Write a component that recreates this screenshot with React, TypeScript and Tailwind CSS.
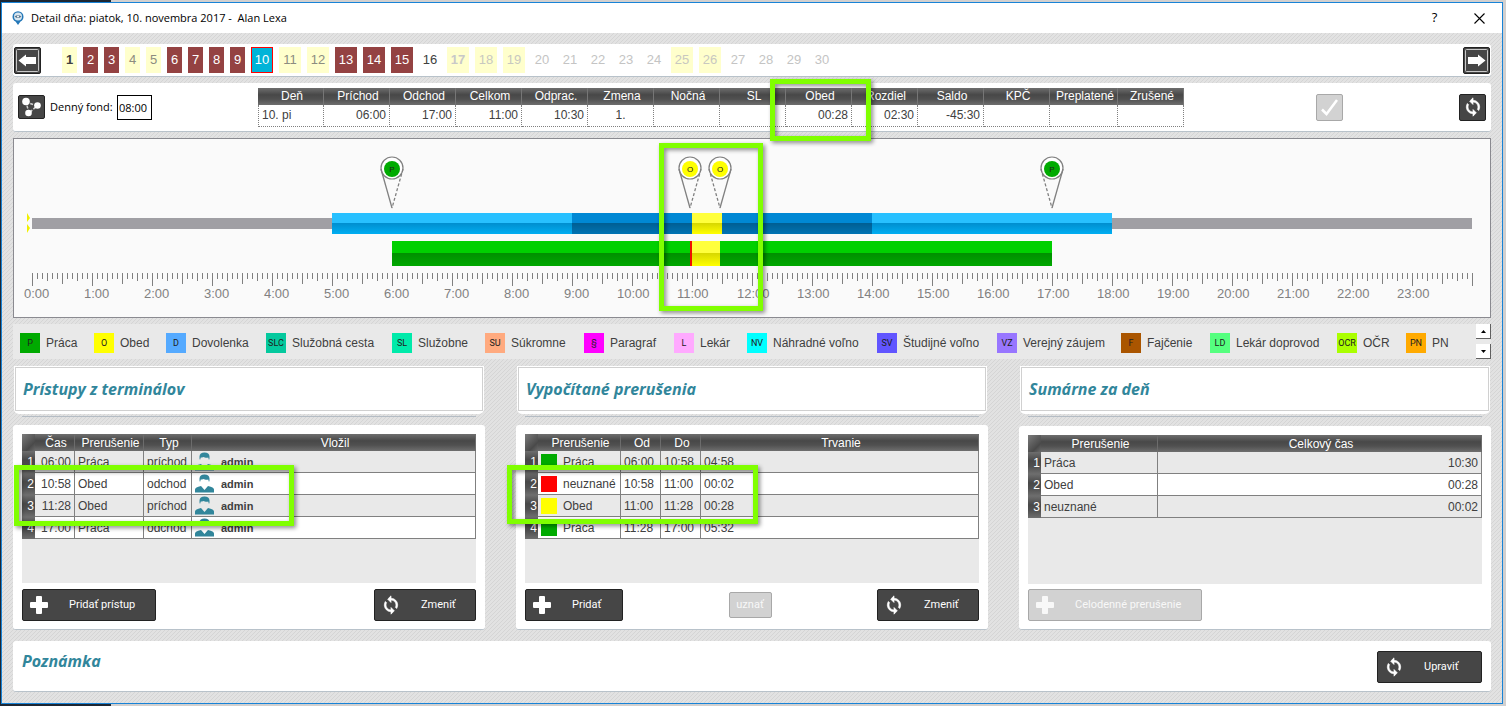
import type { ReactNode } from 'react'

type DayKind = 'weekend' | 'work' | 'selected' | 'plain'

interface Day {
  n: number
  kind: DayKind
  text: string
}

const DAYS: Day[] = Array.from({ length: 30 }, (_, i) => {
  const n = i + 1
  if (n === 10) return { n, kind: 'selected', text: 'text-white' }
  if (n === 1) return { n, kind: 'weekend', text: 'font-bold text-[#404040]' }
  if (n === 16) return { n, kind: 'plain', text: 'text-[#404040]' }
  if (n === 17) return { n, kind: 'weekend', text: 'font-bold text-[#c8c8c8]' }
  if ([4, 5, 11, 12].includes(n)) return { n, kind: 'weekend', text: 'text-[#8c8c80]' }
  if ([18, 19, 25, 26].includes(n)) return { n, kind: 'weekend', text: 'text-[#c8c8c0]' }
  if (n > 16) return { n, kind: 'plain', text: 'text-[#c4c4c4]' }
  return { n, kind: 'work', text: 'text-white' }
})

const DAY_BG: Record<DayKind, string> = {
  weekend: 'bg-[#ffffcc]',
  work: 'bg-[#944242]',
  selected: 'bg-[#00b4d8] border border-[#ff0000]',
  plain: '',
}

const SUMMARY = [
  { head: 'Deň', value: '10. pi', align: 'text-left' },
  { head: 'Príchod', value: '06:00', align: 'text-right' },
  { head: 'Odchod', value: '17:00', align: 'text-right' },
  { head: 'Celkom', value: '11:00', align: 'text-right' },
  { head: 'Odprac.', value: '10:30', align: 'text-right' },
  { head: 'Zmena', value: '1.', align: 'text-center' },
  { head: 'Nočná', value: '', align: 'text-right' },
  { head: 'SL', value: '', align: 'text-right' },
  { head: 'Obed', value: '00:28', align: 'text-right' },
  { head: 'Rozdiel', value: '02:30', align: 'text-right' },
  { head: 'Saldo', value: '-45:30', align: 'text-right' },
  { head: 'KPČ', value: '', align: 'text-right' },
  { head: 'Preplatené', value: '', align: 'text-right' },
  { head: 'Zrušené', value: '', align: 'text-right' },
]

const LEGEND = [
  { code: 'P', label: 'Práca', bg: 'bg-[#00aa00]' },
  { code: 'O', label: 'Obed', bg: 'bg-[#ffff00]' },
  { code: 'D', label: 'Dovolenka', bg: 'bg-[#55aaff]' },
  { code: 'SLC', label: 'Služobná cesta', bg: 'bg-[#04c99e]' },
  { code: 'SL', label: 'Služobne', bg: 'bg-[#00eaaa]' },
  { code: 'SU', label: 'Súkromne', bg: 'bg-[#ffaa7f]' },
  { code: '§', label: 'Paragraf', bg: 'bg-[#ff00ff]' },
  { code: 'L', label: 'Lekár', bg: 'bg-[#ffaaff]' },
  { code: 'NV', label: 'Náhradné voľno', bg: 'bg-[#00ffff]' },
  { code: 'SV', label: 'Študijné voľno', bg: 'bg-[#6155ff]' },
  { code: 'VZ', label: 'Verejný záujem', bg: 'bg-[#9876ff]' },
  { code: 'F', label: 'Fajčenie', bg: 'bg-[#aa5500]' },
  { code: 'LD', label: 'Lekár doprovod', bg: 'bg-[#55ff7f]' },
  { code: 'OCR', label: 'OČR', bg: 'bg-[#aaff00]' },
  { code: 'PN', label: 'PN', bg: 'bg-[#ffaa00]' },
]

const PINS = [
  { at: 6, code: 'P', fill: '#00aa00', out: false },
  { at: 658 / 60, code: 'O', fill: '#ffff00', out: false },
  { at: 688 / 60, code: 'O', fill: '#ffff00', out: true },
  { at: 17, code: 'P', fill: '#00aa00', out: true },
]

const ACCESSES = [
  { time: '06:00', what: 'Práca', type: 'príchod' },
  { time: '10:58', what: 'Obed', type: 'odchod' },
  { time: '11:28', what: 'Obed', type: 'príchod' },
  { time: '17:00', what: 'Práca', type: 'odchod' },
]

const BREAKS = [
  { what: 'Práca', from: '06:00', to: '10:58', len: '04:58', bg: 'bg-[#00aa00]' },
  { what: 'neuznané', from: '10:58', to: '11:00', len: '00:02', bg: 'bg-[#ff0000]' },
  { what: 'Obed', from: '11:00', to: '11:28', len: '00:28', bg: 'bg-[#ffff00]' },
  { what: 'Práca', from: '11:28', to: '17:00', len: '05:32', bg: 'bg-[#00aa00]' },
]

const TOTALS = [
  { what: 'Práca', total: '10:30' },
  { what: 'Obed', total: '00:28' },
  { what: 'neuznané', total: '00:02' },
]

const pct = (hour: number) => `${(hour / 24) * 100}%`

const DARK_BTN =
  'flex items-center rounded-[2px] border border-[#222222] bg-[#464646] text-white'
const OFF_BTN =
  'flex items-center rounded-[2px] border border-[#a8a8a8] bg-[#d2d2d2] text-[#f8f8f8]'
const HEAD_BG = 'bg-[linear-gradient(180deg,#6e6e6e_0%,#484848_40%,#505050_65%,#6e6e6e_100%)]'
const CORNER_BG = 'bg-[linear-gradient(135deg,#7c7c7c_0%,#4a4a4a_70%,#6a6a6a_100%)]'

function Card({ className = '', children }: { className?: string; children: ReactNode }) {
  return (
    <div className={`rounded-[3px] border-b border-[#b8c2ca] bg-white ${className}`}>{children}</div>
  )
}

function Highlight({ className, left }: { className: string; left?: string }) {
  return (
    <div
      className={`pointer-events-none absolute z-10 border-5 border-[#80ff00] drop-shadow-[2px_2px_2px_rgba(0,0,0,0.45)] ${className}`}
      style={left ? { left } : undefined}
    />
  )
}

function PlusIcon() {
  return (
    <svg width="18" height="18" viewBox="0 0 18 18" fill="currentColor">
      <rect x="6" y="0" width="6" height="18" rx="1" />
      <rect x="0" y="6" width="18" height="6" rx="1" />
    </svg>
  )
}

function SyncIcon() {
  return (
    <svg width="20" height="20" viewBox="0 0 24 24" fill="currentColor" stroke="currentColor" strokeWidth="0.8">
      <path d="M12 4V1L8 5l4 4V6c3.310 0 6 2.690 6 6 0 1.010-.25 1.970-.7 2.800l1.460 1.460A7.930 7.930 0 0 0 20 12c0-4.420-3.580-8-8-8z" />
      <path d="M12 18c-3.310 0-6-2.690-6-6 0-1.010.25-1.970.7-2.800L5.240 7.740A7.930 7.930 0 0 0 4 12c0 4.420 3.580 8 8 8v3l4-4-4-4v3z" />
    </svg>
  )
}

function ArrowIcon({ right = false }: { right?: boolean }) {
  return (
    <svg width="25" height="25" viewBox="0 0 25 25" fill="none">
      <rect x="1.5" y="1.5" width="22" height="22" rx="1" stroke="#c8c8c8" />
      <path
        d={
          right
            ? 'M4 9h10V6.500L21.500 12.500L14 18.500V16H4z'
            : 'M21 9H11V6.500L3.500 12.500L11 18.500V16H21z'
        }
        fill="#fff"
      />
    </svg>
  )
}

function UserIcon() {
  return (
    <svg className="shrink-0" width="19" height="19" viewBox="0 0 19 19" fill="#31869b">
      <path d="M4.500 4.500C4.500 2 6.500 .5 9.500 .5S14.500 2 14.500 4.500V6.500L14 8L13.200 5.500C11.500 6 9.500 5.500 8.500 5C7.500 5.500 6.500 5.500 5.800 5.500L5 8L4.500 6.500z" />
      <path d="M0 18.500V15.500C0 13.800 2 13 6 12L9.500 16L13 12C17 13 19 13.800 19 15.500V18.500z" />
    </svg>
  )
}

function IconButton({
  icon,
  width,
  disabled = false,
  children,
}: {
  icon: 'plus' | 'sync'
  width: string
  disabled?: boolean
  children: ReactNode
}) {
  return (
    <button
      type="button"
      disabled={disabled}
      className={`${disabled ? OFF_BTN : DARK_BTN} h-8 ${width} font-['Roboto',sans-serif] text-[11px] whitespace-nowrap`}
    >
      <span className={`flex w-[46px] shrink-0 ${icon === 'plus' ? 'pl-[7px]' : 'pl-[6px]'}`}>
        {icon === 'plus' ? <PlusIcon /> : <SyncIcon />}
      </span>
      {children}
    </button>
  )
}

function TitleBar() {
  return (
    <div className="flex h-[30px] items-center bg-white font-['Open_Sans',sans-serif] text-[11px] text-black">
      <svg className="ml-[10px]" width="12" height="14" viewBox="0 0 12 14">
        <path d="M6 14L3.500 10.500C1.500 9.500 .5 7.800 .5 5.700A5.500 5.500 0 0 1 11.500 5.700C11.500 7.800 10.500 9.500 8.500 10.500z" fill="#2478b8" />
        <circle cx="6" cy="5.500" r="4" fill="#d8e6f0" />
        <path d="M2.500 5.500Q6 2.500 9.500 5.500Q6 8.500 2.500 5.500z" fill="#5a7890" />
        <circle cx="6" cy="5.500" r="1" fill="#fff" />
      </svg>
      <h1 className="ml-[7px] whitespace-pre">Detail dňa: piatok, 10. novembra 2017 -  Alan Lexa</h1>
      <button type="button" aria-label="Pomoc" className="ml-auto h-[30px] w-[45px] text-[13px]">
        ?
      </button>
      <button type="button" aria-label="Zavrieť" className="flex h-[30px] w-[45px] items-center justify-center">
        <svg width="11" height="11" viewBox="0 0 11 11" stroke="#000" strokeWidth="1.100">
          <path d="M.5 .5L10.500 10.500M10.500 .5L.5 10.500" />
        </svg>
      </button>
    </div>
  )
}

function DayBar() {
  return (
    <Card className="flex h-[33px] items-center px-px">
      <button type="button" aria-label="Predchádzajúci deň" className={`${DARK_BTN} size-[27px] shrink-0`}>
        <ArrowIcon />
      </button>
      <div className="ml-[21px] flex gap-[6px] text-[13px]">
        {DAYS.map((d) => (
          <button
            key={d.n}
            type="button"
            className={`h-[26px] ${d.n < 10 ? 'w-[15px]' : 'w-[22px]'} ${DAY_BG[d.kind]} ${d.text}`}
          >
            {d.n}
          </button>
        ))}
      </div>
      <button type="button" aria-label="Nasledujúci deň" className={`${DARK_BTN} ml-auto size-[27px] shrink-0`}>
        <ArrowIcon right />
      </button>
    </Card>
  )
}

function SummaryBar() {
  return (
    <Card className="flex h-[49px] items-center px-[5px]">
      <button type="button" aria-label="Väzby" className={`${DARK_BTN} h-6 w-[27px] shrink-0 justify-center`}>
        <svg width="23" height="22" viewBox="0 0 23 22" fill="#fff">
          <path d="M6 6L17 10L9 17z" fill="none" stroke="#d0d0d0" strokeWidth="1.500" strokeDasharray="3 1.500" />
          <circle cx="6" cy="5.500" r="3.800" />
          <circle cx="17.500" cy="9.500" r="3.300" />
          <circle cx="8.500" cy="17" r="3.300" />
        </svg>
      </button>
      <label htmlFor="fond" className="ml-[5px] w-[67px] font-['Open_Sans',sans-serif] text-[11px] whitespace-nowrap text-black">
        Denný fond:
      </label>
      <input
        id="fond"
        defaultValue="08:00"
        className="h-[25px] w-[35px] border border-black bg-white pl-px font-['Open_Sans',sans-serif] text-[11px] text-black"
      />
      <div className="relative ml-[106px] shrink-0">
        <table className="w-[926px] table-fixed border-separate border-spacing-0 leading-4">
          <colgroup>
            {SUMMARY.map((c) => (
              <col key={c.head} className={c.head === 'Preplatené' ? 'w-[68px]' : 'w-[66px]'} />
            ))}
          </colgroup>
          <thead>
            <tr className={`h-[17px] ${HEAD_BG} text-white`}>
              {SUMMARY.map((c) => (
                <th key={c.head} className="border-r border-[#767676] p-0 pl-[3px] font-normal">
                  {c.head}
                </th>
              ))}
            </tr>
          </thead>
          <tbody>
            <tr className="h-[22px]">
              {SUMMARY.map((c) => (
                <td
                  key={c.head}
                  className={`border-r border-b border-dotted border-[#808080] px-[3px] py-0 first:border-l ${c.align}`}
                >
                  {c.value}
                </td>
              ))}
            </tr>
          </tbody>
        </table>
        <Highlight className="-top-[9px] left-[512px] h-[62px] w-[101px]" />
      </div>
      <button type="button" disabled aria-label="Potvrdiť" className={`${OFF_BTN} ml-[132px] size-[27px] shrink-0 justify-center`}>
        <svg width="19" height="19" viewBox="0 0 19 19" fill="none" stroke="#fff" strokeWidth="2.500">
          <path d="M2 11.500L6.500 16L17 2" />
        </svg>
      </button>
      <button type="button" aria-label="Obnoviť" className={`${DARK_BTN} ml-auto size-[27px] shrink-0 justify-center`}>
        <SyncIcon />
      </button>
    </Card>
  )
}

function Bar({ from, to, y, h, fill, top }: { from: number; to: number; y: number; h: number; fill: string; top: string }) {
  return (
    <>
      <rect x={pct(from)} y={y} width={pct(to - from)} height={h} fill={`url(#${fill})`} />
      <rect x={pct(from)} y={y} width={pct(to - from)} height={Math.floor(h / 2)} fill={top} />
    </>
  )
}

function Shade({ id, from, to }: { id: string; from: string; to: string }) {
  return (
    <linearGradient id={id} x1="0" y1="0" x2="0" y2="1">
      <stop offset="0.500" stopColor={from} />
      <stop offset="1" stopColor={to} />
    </linearGradient>
  )
}

function tickLength(i: number) {
  if (i % 12 === 0) return 13
  if (i % 6 === 0) return 11
  if (i % 3 === 0) return 8
  return 6
}

function Timeline() {
  return (
    <div className="h-[180px] border border-[#8a8a90] bg-[#fafafa] px-[18px]">
      <div className="relative">
        <svg className="block h-[178px] w-full overflow-visible">
          <defs>
            <Shade id="light" from="#008fd0" to="#00aef2" />
            <Shade id="deep" from="#005f94" to="#0074b4" />
            <Shade id="yellow" from="#d8d800" to="#ffff00" />
            <Shade id="green" from="#009000" to="#00a800" />
          </defs>

          <rect x="0" y="79" width="100%" height="11" fill="#a09fa4" />
          <path d="M-5 74v9l3 -4zM-5 85v9l3 -5z" fill="#f0f000" />
          <Bar from={5} to={18} y={74} h={21} fill="light" top="#27c0ff" />
          <Bar from={9} to={14} y={74} h={21} fill="deep" top="#0088d4" />
          <Bar from={11} to={11.5} y={74} h={21} fill="yellow" top="#ffff3c" />

          <Bar from={6} to={17} y={102} h={25} fill="green" top="#00d000" />
          <rect x={pct(658 / 60)} y="102" width={pct(2 / 60)} height="25" fill="#f01000" />
          <Bar from={11} to={688 / 60} y={102} h={25} fill="yellow" top="#ffff3c" />

          {Array.from({ length: 289 }, (_, i) => (
            <svg key={i} x={pct(i / 12)} className="overflow-visible">
              <rect y="134" width="1" height={tickLength(i)} fill="#808080" />
            </svg>
          ))}

          {Array.from({ length: 24 }, (_, h) => (
            <svg key={h} x={pct(h)} className="overflow-visible">
              <text x={h < 10 ? -8 : -15} y="159" fontSize="13" fill="#808080">
                {h}:00
              </text>
            </svg>
          ))}

          {PINS.map((p) => (
            <svg key={p.at} x={pct(p.at)} className="overflow-visible">
              <circle cx="0" cy="29" r="11" fill="#fff" stroke="#808080" strokeWidth="1.200" />
              <path d="M-11 30L0 69" stroke="#808080" strokeWidth="1.300" strokeDasharray={p.out ? '3 2' : undefined} />
              <path d="M11 30L0 69" stroke="#808080" strokeWidth="1.300" strokeDasharray={p.out ? undefined : '3 2'} />
              <circle cx="0" cy="30" r="8" fill={p.fill} />
              <text y="33" textAnchor="middle" fontSize="8" fill="#202020">
                {p.code}
              </text>
            </svg>
          ))}
        </svg>
        <Highlight className="top-1 h-[168px] w-[104px]" left={pct(10.45)} />
      </div>
    </div>
  )
}

function Legend() {
  return (
    <div className="flex h-[35px] justify-between bg-[#e9e9e9] pl-[7px]">
      <ul className="grid grid-cols-[74px_72px_100px_126px_93px_99px_90px_73px_130px_120px_124px_89px_127px_69px_auto] pt-[9px]">
        {LEGEND.map((l) => (
          <li key={l.code} className="flex h-5 items-center gap-[6px] whitespace-nowrap">
            <span className={`flex size-5 items-center justify-center font-['Roboto',sans-serif] text-[9px] text-[#202020] ${l.bg}`}>
              {l.code}
            </span>
            {l.label}
          </li>
        ))}
      </ul>
      <div className="flex w-[15px] flex-col justify-between">
        <button type="button" aria-label="Nahor" className="flex h-[15px] items-center justify-center border-r border-b border-[#606060] bg-white">
          <svg width="5" height="3" viewBox="0 0 5 3"><path d="M0 3L2.500 0L5 3z" /></svg>
        </button>
        <button type="button" aria-label="Nadol" className="flex h-[15px] items-center justify-center border-r border-b border-[#606060] bg-white">
          <svg width="5" height="3" viewBox="0 0 5 3"><path d="M0 0L2.500 3L5 0z" /></svg>
        </button>
      </div>
    </div>
  )
}

function PanelTitle({ children }: { children: ReactNode }) {
  return (
    <div className="px-px pt-px">
      <div className="rounded-b-[5px] bg-white p-px pb-[3px]">
        <div className="flex h-[44px] items-center border border-[#d0d0d0] pl-[7px]">
          <Heading>{children}</Heading>
        </div>
      </div>
      <div className="mx-2 mt-[2px] h-px bg-[#b4bcc4]" />
    </div>
  )
}

function Heading({ children }: { children: ReactNode }) {
  return (
    <h2 className="font-['Open_Sans',sans-serif] text-base leading-5 font-bold text-[#31869b] italic">{children}</h2>
  )
}

function Grid({ widths, heads, rows }: { widths: string[]; heads: string[]; rows: ReactNode[][] }) {
  return (
    <table className="w-full table-fixed border-separate border-spacing-0 leading-4">
      <colgroup>
        <col className="w-[13px]" />
        {widths.map((w, i) => (
          <col key={i} className={w} />
        ))}
      </colgroup>
      <thead>
        <tr className={`h-[17px] ${HEAD_BG} text-white`}>
          <th aria-label="Riadok" className={`p-0 ${CORNER_BG}`} />
          {heads.map((h) => (
            <th key={h} className="border-r border-[#6c6c6c] p-0 pl-[3px] font-normal">
              {h}
            </th>
          ))}
        </tr>
      </thead>
      <tbody>
        {rows.map((cells, i) => (
          <tr key={i} className={`h-[22px] ${i % 2 ? 'bg-white' : 'bg-[#e9e9e9]'}`}>
            <th scope="row" className={`p-0 pr-px text-right font-normal text-white ${HEAD_BG}`}>
              {i + 1}
            </th>
            {cells.map((c, j) => (
              <td key={j} className="border-r border-b border-[#808080] px-[3px] py-0 whitespace-nowrap">
                {c}
              </td>
            ))}
          </tr>
        ))}
      </tbody>
    </table>
  )
}

function AccessPanel() {
  return (
    <Card className="flex flex-col px-[9px] pt-[9px] pb-[8px]">
      <div className="relative min-h-[149px] bg-[#e9e9e9]">
        <Grid
          widths={['w-[40px]', 'w-[69px]', 'w-[48px]', '']}
          heads={['Čas', 'Prerušenie', 'Typ', 'Vložil']}
          rows={ACCESSES.map((a) => [
            <div className="text-right">{a.time}</div>,
            a.what,
            a.type,
            <div className="flex items-center gap-[7px]">
              <UserIcon />
              <b className="text-[11px]">admin</b>
            </div>,
          ])}
        />
        <Highlight className="top-[31px] -left-2 h-[61px] w-[280px]" />
      </div>
      <div className="mt-[6px] flex items-center justify-between">
        <IconButton icon="plus" width="w-[134px]">Pridať prístup</IconButton>
        <IconButton icon="sync" width="w-[102px]">Zmeniť</IconButton>
      </div>
    </Card>
  )
}

function BreaksPanel() {
  return (
    <Card className="flex flex-col px-[9px] pt-[9px] pb-[8px]">
      <div className="relative min-h-[149px] bg-[#e9e9e9]">
        <Grid
          widths={['w-[83px]', 'w-[40px]', 'w-[40px]', '']}
          heads={['Prerušenie', 'Od', 'Do', 'Trvanie']}
          rows={BREAKS.map((b) => [
            <div className="flex items-center gap-[6px]">
              <span className={`size-4 ${b.bg}`} />
              {b.what}
            </div>,
            b.from,
            b.to,
            b.len,
          ])}
        />
        <Highlight className="top-[31px] -left-[18px] h-[59px] w-[251px]" />
      </div>
      <div className="mt-[6px] flex items-center justify-between">
        <IconButton icon="plus" width="w-[98px]">Pridať</IconButton>
        <button type="button" disabled className={`${OFF_BTN} h-[26px] w-[43px] justify-center font-['Roboto',sans-serif] text-[11px]`}>
          uznať
        </button>
        <IconButton icon="sync" width="w-[102px]">Zmeniť</IconButton>
      </div>
    </Card>
  )
}

function TotalsPanel() {
  return (
    <Card className="mt-px flex flex-col px-[9px] pt-[9px] pb-[8px]">
      <div className="min-h-[149px] bg-[#e9e9e9]">
        <Grid
          widths={['w-[117px]', '']}
          heads={['Prerušenie', 'Celkový čas']}
          rows={TOTALS.map((t) => [t.what, <div className="text-right">{t.total}</div>])}
        />
      </div>
      <div className="mt-auto flex">
        <IconButton icon="plus" width="w-[174px]" disabled>Celodenné prerušenie</IconButton>
      </div>
    </Card>
  )
}

export default function App() {
  return (
    <div className="flex min-h-screen flex-col bg-[linear-gradient(90deg,#1d2733_111px,#d2d0cf_111px)] pt-[2px] pr-[3px] pb-[2px] pl-px font-['Liberation_Sans',Arial,sans-serif] text-xs text-[#404040]">
      <div className="flex grow flex-col border border-[#1883d7]">
        <TitleBar />
        <main className="flex grow flex-col gap-[6px] bg-[#e0e0e0] bg-[linear-gradient(135deg,#e2e2e2_44%,#d5d5d5_44%,#d5d5d5_56%,#e2e2e2_56%)] bg-[size:4px_4px] p-[11px]">
          <DayBar />
          <SummaryBar />
          <Timeline />
          <Legend />
          <div className="grid grid-cols-3 gap-x-[31px] gap-y-2">
            <PanelTitle>Prístupy z terminálov</PanelTitle>
            <PanelTitle>Vypočítané prerušenia</PanelTitle>
            <PanelTitle>Sumárne za deň</PanelTitle>
            <AccessPanel />
            <BreaksPanel />
            <TotalsPanel />
          </div>
          <Card className="mt-[5px] flex min-h-[51px] items-start justify-between px-[9px] pt-[10px]">
            <Heading>Poznámka</Heading>
            <IconButton icon="sync" width="w-[105px]">Upraviť</IconButton>
          </Card>
        </main>
      </div>
    </div>
  )
}
